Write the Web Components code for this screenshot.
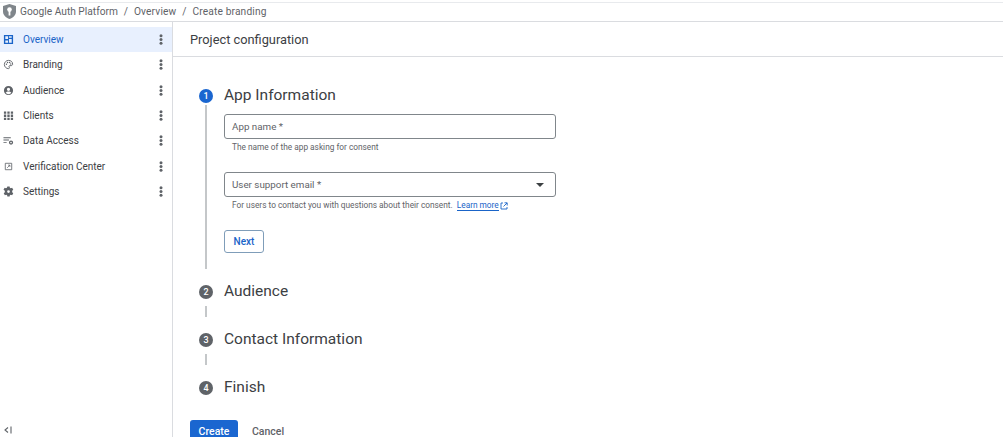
<!DOCTYPE html>
<html><head><meta charset="utf-8"><style>
html,body{margin:0;padding:0;background:#fff;overflow:hidden}
body{width:1003px;height:441px;font-family:Roboto,"Liberation Sans",sans-serif;color:#3c4043}
</style></head><body>
<app-shell>
<div slot="side">
<nav-item active label="Overview" icon="overview"></nav-item>
<nav-item label="Branding" icon="palette"></nav-item>
<nav-item label="Audience" icon="person"></nav-item>
<nav-item label="Clients" icon="apps"></nav-item>
<nav-item label="Data Access" icon="data"></nav-item>
<nav-item label="Verification Center" icon="verify"></nav-item>
<nav-item label="Settings" icon="gear"></nav-item>
</div>
<step-item n="1" active title-text="App Information" line="164">
<text-field gap="19" label="App name *" help="The name of the app asking for consent"></text-field>
<text-field gap="19" select label="User support email *" help="For users to contact you with questions about their consent." link="Learn more"></text-field>
<outline-btn>Next</outline-btn>
</step-item>
<step-item n="2" title-text="Audience" line="11"></step-item>
<step-item n="3" title-text="Contact Information" line="11"></step-item>
<step-item n="4" title-text="Finish"></step-item>
</app-shell>
<script>
const ICONS={
overview:'<path fill="#1a64c8" fill-rule="evenodd" d="M2 2h20v20H2zM5 5v6h6V5zm8 0v3h6V5zm0 6v8h6v-8zM5 14v5h6v-5z"/>',
palette:'<path fill="none" stroke="#5f6368" stroke-width="2" d="M12 3a9 9 0 1 0 0 18c1.500 0 2-1 2-2 0-1.300-1-1.500-1-2.700 0-1 .8-1.800 2-1.800h2.500c2.200 0 3.500-1.500 3.500-3.500C21 6 17 3 12 3z"/><circle cx="7.500" cy="11.500" r="1.500" fill="#5f6368"/><circle cx="10" cy="7.500" r="1.500" fill="#5f6368"/><circle cx="14.500" cy="7.500" r="1.500" fill="#5f6368"/><circle cx="17" cy="11" r="1.500" fill="#5f6368"/>',
person:'<path fill="#5f6368" d="M12 2a10 10 0 1 0 0 20 10 10 0 0 0 0-20zm0 4a3.500 3.500 0 1 1 0 7 3.500 3.500 0 0 1 0-7zm0 14a8 8 0 0 1-6.200-3c1.200-1.800 3.800-2.800 6.200-2.800s5 1 6.200 2.800A8 8 0 0 1 12 20z"/>',
apps:'<path fill="#5f6368" d="M2 3h5v5H2zm7.500 0h5v5h-5zM17 3h5v5h-5zM2 10h5v5H2zm7.500 0h5v5h-5zM17 10h5v5h-5zM2 17h5v5H2zm7.500 0h5v5h-5zM17 17h5v5h-5z"/>',
data:'<path fill="#5f6368" d="M1 5h16v2H1zm0 5h12v2H1zm0 5h7v2H1z"/><circle cx="17.500" cy="16.500" r="3.200" fill="none" stroke="#5f6368" stroke-width="2.800"/>',
verify:'<path fill="none" stroke="#5f6368" stroke-width="1.800" d="M5 5h14v14H5z"/><path fill="none" stroke="#5f6368" stroke-width="1.600" d="M9 15l6-6M11 9h4v4"/>',
gear:'<path fill="#5f6368" fill-rule="evenodd" d="M9.500 1h5l.5 3 2 1.100 2.900-1.100 2.500 4.300-2.400 1.900v3.600l2.400 1.900-2.500 4.300-2.900-1.100-2 1.100-.5 3h-5l-.5-3-2-1.100-2.900 1.100-2.500-4.300 2.400-1.900v-3.600L1.100 8.300l2.500-4.300L6.500 5.100l2-1.100zM12 9a3 3 0 1 0 0 6 3 3 0 0 0 0-6z"/>'
};
const def=(n,html)=>{customElements.define(n,class extends HTMLElement{
connectedCallback(){if(this.shadowRoot)return;const r=this.attachShadow({mode:'open'});r.innerHTML=typeof html==='function'?html(this):html;}
});};
def('app-shell',`<style>
:host{display:grid;grid-template-columns:173px 1fr;grid-template-rows:22px 415px;width:1003px;height:437px;overflow:hidden;background:#fff}
.top{grid-column:1/3}
aside{border-right:1px solid #dadce0;padding-top:5px;display:flex;flex-direction:column;min-height:0}
.collapse{margin-top:auto;height:15px;padding-left:3px;display:flex;align-items:center}
main{display:flex;flex-direction:column;min-width:0}
.head{height:34px;border-bottom:1px solid #dadce0;display:flex;align-items:center;padding-left:17px;font-size:12.800px;color:#3c4043;flex:none}
.steps{padding:29px 0 0 26px;flex:1}
.actions{display:flex;padding-left:17px;gap:14px;flex:none;height:17px;overflow:hidden;align-items:flex-start}
.create{width:48px;height:22px;background:#1a66d0;color:#fff;border-radius:3px 3px 0 0;font-size:10.500px;font-weight:500;display:flex;align-items:center;justify-content:center}
.cancel{font-size:10.500px;font-weight:500;color:#5f6368;line-height:23px}
</style>
<div class="top"><top-bar></top-bar></div>
<aside><slot name="side"></slot><div class="collapse"><svg width="10" height="10" viewBox="0 0 10 10"><path d="M5 2.500L2 5l3 2.500M8 1.500v7" fill="none" stroke="#5f6368" stroke-width="1.100"/></svg></div></aside>
<main><div class="head">Project configuration</div><div class="steps"><slot></slot></div>
<div class="actions"><div class="create">Create</div><div class="cancel">Cancel</div></div></main>`);
def('top-bar',`<style>
:host{display:flex;align-items:center;box-sizing:border-box;height:20px;margin-top:2px;padding-bottom:1px;border-top:1px solid #e8eaed;border-bottom:1px solid #dadce0;padding-left:3px;font-size:10.200px;color:#5f6368}
svg{margin-right:4px;flex:none}
i{font-style:normal;margin:0 5.500px;width:5px;text-align:center}
.w{letter-spacing:.15px}
</style><svg width="13" height="15" viewBox="0 0 13 15"><path fill="#80868b" d="M6.500 0L13 2v5.500c0 3.400-2.700 6.200-6.500 7.500C2.700 13.700 0 10.900 0 7.500V2z"/><circle cx="6.500" cy="5.600" r="2.300" fill="#fff"/><path fill="#fff" d="M5.600 7h1.800v4.500H5.600z"/></svg><span>Google Auth Platform</span><i>/</i><span class="w">Overview</span><i>/</i><span class="w">Create branding</span>`);
def('nav-item',h=>`<style>
:host{display:flex;align-items:center;height:25.300px;font-size:10px;color:${h.hasAttribute('active')?'#1a64c8':'#3c4043'};background:${h.hasAttribute('active')?'#e8f0fe':'transparent'};padding-left:3px;padding-right:7px}
svg.i{width:11px;height:11px;flex:none;margin-right:9px}
span{flex:1;white-space:nowrap}
svg.m{flex:none}
</style><svg class="i" viewBox="0 0 24 24">${ICONS[h.getAttribute('icon')]}</svg><span>${h.getAttribute('label')}</span><svg class="m" width="8" height="11" viewBox="0 0 8 11"><circle cx="4" cy="1.700" r="1.500" fill="#5f6368"/><circle cx="4" cy="5.500" r="1.500" fill="#5f6368"/><circle cx="4" cy="9.300" r="1.500" fill="#5f6368"/></svg>`);
def('step-item',h=>{const l=h.getAttribute('line');const a=h.hasAttribute('active');return `<style>
:host{display:grid;grid-template-columns:14px 1fr;column-gap:11px;grid-template-rows:18px auto auto}
.c{width:14px;height:14px;border-radius:50%;background:${a?'#1a66d0':'#5f6368'};color:#fff;font-size:9px;font-weight:500;display:flex;align-items:center;justify-content:center;margin-top:3px}
.t{font-size:15.500px;line-height:18px;color:#3c4043;white-space:nowrap}
.l{grid-column:1;grid-row:2;width:2px;margin:${a?'1px':'6px'} 0 0 6px;background:#c4c7c9;height:${l||0}px;display:${l?'block':'none'}}
.b{grid-column:2;grid-row:2;${a?'padding-top:10px':''}}
.g{grid-column:1/3;height:${l?'13px':'0'}}
</style><div class="c">${h.getAttribute('n')}</div><div class="t">${h.getAttribute('title-text')}</div><div class="l"></div><div class="b"><slot></slot></div><div class="g"></div>`});
def('text-field',h=>`<style>
:host{display:block;width:332px;margin-bottom:${h.getAttribute('gap')}px;font-size:9.800px}
.f{box-sizing:border-box;height:25px;border:1px solid #80868b;border-radius:3px;display:flex;align-items:center;justify-content:space-between;padding:0 11px 0 7px;color:#5f6368}
.h{font-size:8.300px;color:#5f6368;padding:3px 0 0 8px;line-height:11px;display:flex;align-items:center;white-space:nowrap}
a{color:#1a64c8;border-bottom:1px solid #1a64c8;margin-left:4px;line-height:10px}
svg{margin-left:1px}
</style><div class="f"><span>${h.getAttribute('label')}</span>${h.hasAttribute('select')?'<svg width="8" height="4" viewBox="0 0 8 4"><path d="M0 0h8L4 4z" fill="#3c4043"/></svg>':''}</div><div class="h"><span>${h.getAttribute('help')}</span>${h.getAttribute('link')?`<a>${h.getAttribute('link')}</a><svg width="8" height="8" viewBox="0 0 8 8"><path d="M3 1H1v6h6V5M4.500 .8h2.700v2.700M7 1L3.500 4.500" fill="none" stroke="#1a64c8" stroke-width=".9"/></svg>`:''}</div>`);
def('outline-btn',`<style>
:host{display:flex;box-sizing:border-box;width:40px;height:23px;border:1px solid #7f9db9;border-radius:3px;align-items:center;justify-content:center;font-size:10px;font-weight:500;color:#1a64c8}
</style><slot></slot>`);
</script>
</body></html>
